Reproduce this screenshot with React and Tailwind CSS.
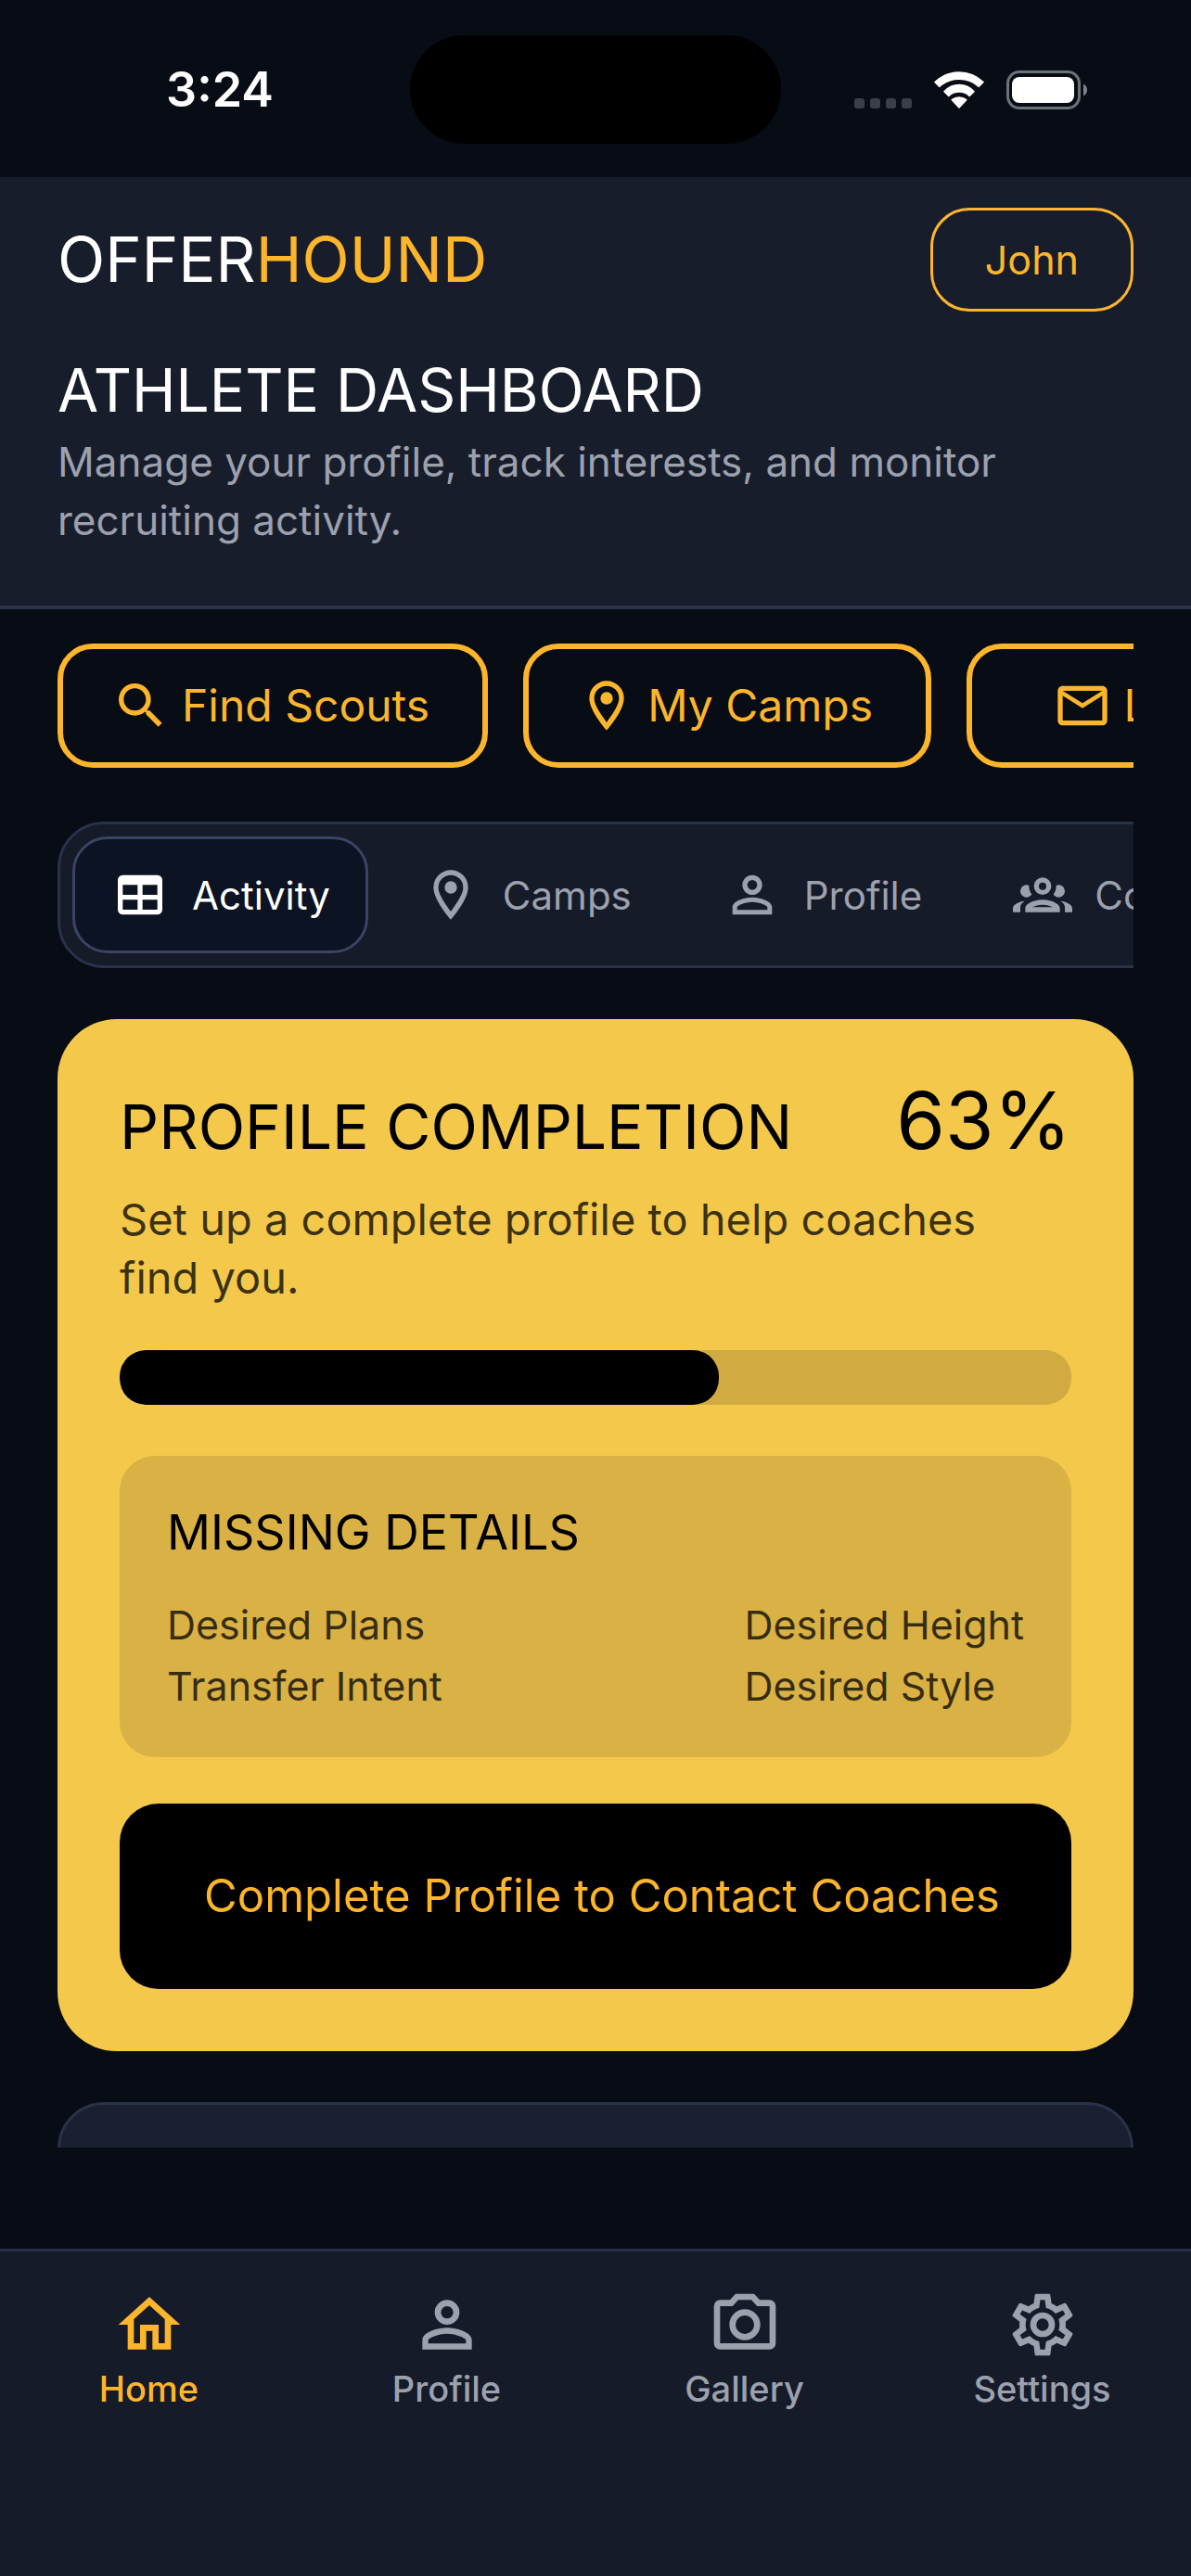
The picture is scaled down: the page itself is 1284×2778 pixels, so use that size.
import React from "react";

const ICONS = {
  magnify:
    "M9.5,3A6.5,6.5 0 0,1 16,9.5C16,11.11 15.41,12.59 14.44,13.73L14.71,14H15.5L20.5,19L19,20.5L14,15.5V14.71L13.73,14.44C12.59,15.41 11.11,16 9.5,16A6.5,6.5 0 0,1 3,9.5A6.5,6.5 0 0,1 9.5,3M9.5,5C7,5 5,7 5,9.5C5,12 7,14 9.5,14C12,14 14,12 14,9.5C14,7 12,5 9.5,5Z",
  marker:
    "M12,6.5A2.5,2.5 0 0,1 14.5,9A2.5,2.5 0 0,1 12,11.5A2.5,2.5 0 0,1 9.5,9A2.5,2.5 0 0,1 12,6.5M12,2A7,7 0 0,1 19,9C19,14.25 12,22 12,22C12,22 5,14.25 5,9A7,7 0 0,1 12,2M12,4A5,5 0 0,0 7,9C7,10 7,12 12,18.71C17,12 17,10 17,9A5,5 0 0,0 12,4Z",
  email:
    "M22 6C22 4.9 21.1 4 20 4H4C2.9 4 2 4.9 2 6V18C2 19.1 2.9 20 4 20H20C21.1 20 22 19.1 22 18V6M20 6L12 11L4 6H20M20 18H4V8L12 13L20 8V18Z",
  table:
    "M5,4H19A2,2 0 0,1 21,6V18A2,2 0 0,1 19,20H5A2,2 0 0,1 3,18V6A2,2 0 0,1 5,4M5,8V12H11V8H5M13,8V12H19V8H13M5,14V18H11V14H5M13,14V18H19V14H13Z",
  account:
    "M12,4A4,4 0 0,1 16,8A4,4 0 0,1 12,12A4,4 0 0,1 8,8A4,4 0 0,1 12,4M12,6A2,2 0 0,0 10,8A2,2 0 0,0 12,10A2,2 0 0,0 14,8A2,2 0 0,0 12,6M12,13C14.67,13 20,14.33 20,17V20H4V17C4,14.33 9.33,13 12,13M12,14.9C9.03,14.9 5.9,16.36 5.9,17V18.1H18.1V17C18.1,16.36 14.97,14.9 12,14.9Z",
  group:
    "M12,5A3.5,3.5 0 0,0 8.5,8.5A3.5,3.5 0 0,0 12,12A3.5,3.5 0 0,0 15.5,8.5A3.5,3.5 0 0,0 12,5M12,7A1.5,1.5 0 0,1 13.5,8.5A1.5,1.5 0 0,1 12,10A1.5,1.5 0 0,1 10.5,8.5A1.5,1.5 0 0,1 12,7M5.5,8A2.5,2.5 0 0,0 3,10.5C3,11.44 3.53,12.25 4.29,12.68C4.65,12.88 5.06,13 5.5,13C5.94,13 6.35,12.88 6.71,12.68C7.08,12.47 7.39,12.17 7.62,11.81C6.89,10.86 6.5,9.7 6.5,8.5C6.5,8.41 6.5,8.31 6.5,8.22C6.2,8.08 5.86,8 5.5,8M18.5,8C18.14,8 17.8,8.08 17.5,8.22C17.5,8.31 17.5,8.41 17.5,8.5C17.5,9.7 17.11,10.86 16.38,11.81C16.5,12 16.63,12.15 16.78,12.3C16.94,12.45 17.1,12.58 17.29,12.68C17.65,12.88 18.06,13 18.5,13C18.94,13 19.35,12.88 19.71,12.68C20.47,12.25 21,11.44 21,10.5A2.5,2.5 0 0,0 18.5,8M12,14C9.66,14 5,15.17 5,17.5V19H19V17.5C19,15.17 14.34,14 12,14M4.71,14.55C2.78,14.78 0,15.76 0,17.5V19H3V17.07C3,16.06 3.69,15.22 4.71,14.55M19.29,14.55C20.31,15.22 21,16.06 21,17.07V19H24V17.5C24,15.76 21.22,14.78 19.29,14.55M12,16C13.53,16 15.24,16.5 16.23,17H7.77C8.76,16.5 10.47,16 12,16Z",
  home: "M12 5.69L17 10.19V18H15V12H9V18H7V10.19L12 5.69M12 3L2 12H5V20H11V14H13V20H19V12H22",
  camera:
    "M20,4H16.83L15,2H9L7.17,4H4A2,2 0 0,0 2,6V18A2,2 0 0,0 4,20H20A2,2 0 0,0 22,18V6A2,2 0 0,0 20,4M20,18H4V6H8.05L9.88,4H14.12L15.95,6H20V18M12,7A5,5 0 0,0 7,12A5,5 0 0,0 12,17A5,5 0 0,0 17,12A5,5 0 0,0 12,7M12,15A3,3 0 0,1 9,12A3,3 0 0,1 12,9A3,3 0 0,1 15,12A3,3 0 0,1 12,15Z",
  cog: "M12,8A4,4 0 0,1 16,12A4,4 0 0,1 12,16A4,4 0 0,1 8,12A4,4 0 0,1 12,8M12,10A2,2 0 0,0 10,12A2,2 0 0,0 12,14A2,2 0 0,0 14,12A2,2 0 0,0 12,10M10,22C9.75,22 9.54,21.82 9.5,21.58L9.13,18.93C8.5,18.68 7.96,18.34 7.44,17.94L4.95,18.95C4.73,19.03 4.46,18.95 4.34,18.73L2.34,15.27C2.21,15.05 2.27,14.78 2.46,14.63L4.57,12.97L4.5,12L4.57,11L2.46,9.37C2.27,9.22 2.21,8.95 2.34,8.73L4.34,5.27C4.46,5.05 4.73,4.96 4.95,5.05L7.44,6.05C7.96,5.66 8.5,5.32 9.13,5.07L9.5,2.42C9.54,2.18 9.75,2 10,2H14C14.25,2 14.46,2.18 14.5,2.42L14.87,5.07C15.5,5.32 16.04,5.66 16.56,6.05L19.05,5.05C19.27,4.96 19.54,5.05 19.66,5.27L21.66,8.73C21.79,8.95 21.73,9.22 21.54,9.37L19.43,11L19.5,12L19.43,13L21.54,14.63C21.73,14.78 21.79,15.05 21.66,15.27L19.66,18.73C19.54,18.95 19.27,19.04 19.05,18.95L16.56,17.95C16.04,18.34 15.5,18.68 14.87,18.93L14.5,21.58C14.46,21.82 14.25,22 14,22H10M11.25,4L10.88,6.61C9.68,6.86 8.62,7.5 7.85,8.39L5.44,7.35L4.69,8.65L6.8,10.2C6.4,11.37 6.4,12.64 6.8,13.8L4.68,15.36L5.43,16.66L7.86,15.62C8.63,16.5 9.68,17.14 10.87,17.38L11.24,20H12.76L13.13,17.39C14.32,17.14 15.37,16.5 16.14,15.62L18.57,16.66L19.32,15.36L17.2,13.81C17.6,12.64 17.6,11.37 17.2,10.2L19.31,8.65L18.56,7.35L16.15,8.39C15.38,7.5 14.32,6.86 13.12,6.62L12.75,4H11.25Z",
};

function Icon({ name, className = "size-16" }) {
  return (
    <svg viewBox="0 0 24 24" fill="currentColor" aria-hidden="true" className={`shrink-0 ${className}`}>
      <path d={ICONS[name]} />
    </svg>
  );
}

function StatusBar() {
  return (
    <div className="flex h-[191px] shrink-0 items-center pt-0.5">
      <div className="flex-1 pl-8 text-center text-[52px] font-semibold leading-none">3:24</div>
      <div className="h-[117px] w-[400px] rounded-full bg-black" />
      <div className="flex flex-1 items-center justify-center gap-6 pr-8">
        <div className="flex h-10 items-end gap-1.5">
          {[0, 1, 2, 3].map((i) => (
            <span key={i} className="h-[11px] w-[11px] rounded-[3px] bg-[#3b3e48]" />
          ))}
        </div>
        <svg viewBox="0 0 54 40" className="h-10 w-[54px]" fill="white" stroke="white" strokeWidth="1.6" strokeLinejoin="round" aria-label="Wi-Fi">
          <path d="M1 11.5C16-2.6 38-2.6 53 11.5L48.3 16.3C36.5 5.6 17.5 5.6 5.7 16.3Z" />
          <path d="M11 21.7C20 12.2 34 12.2 43 21.7L38.2 26.4C32 20.6 22 20.6 15.8 26.4Z" />
          <path d="M19.3 30.6C23.7 27.2 30.3 27.2 34.7 30.6L27 39Z" />
        </svg>
        <svg viewBox="0 0 88 42" className="h-[42px] w-[88px]" aria-label="Battery">
          <rect x="1.5" y="1.5" width="77" height="39" rx="12.5" fill="none" stroke="#6e7178" strokeWidth="3" />
          <rect x="6" y="7" width="67" height="28" rx="8" fill="white" />
          <path d="M83 14.5C88.3 17 88.3 25 83 27.5Z" fill="#808389" />
        </svg>
      </div>
    </div>
  );
}

function Header() {
  return (
    <header className="shrink-0 border-b-4 border-[#2a314a] bg-[#181d2c] px-[62px] pb-[60px] pt-[33px]">
      <div className="flex items-center justify-between">
        <div className="text-[67px] leading-[80px]">
          OFFER<span className="text-[#fdb52b]">HOUND</span>
        </div>
        <button type="button" className="h-28 rounded-[42px] border-[3px] border-[#fdb52b] px-14 text-[43px] text-[#fdb52b]">
          John
        </button>
      </div>
      <h1 className="mt-[45px] text-[64px] leading-[80px]">ATHLETE DASHBOARD</h1>
      <p className="mt-1.5 text-[44px] leading-[63px] text-[#9ca1ae]">
        Manage your profile, track interests, and monitor recruiting activity.
      </p>
    </header>
  );
}

const ACTIONS = [
  { icon: "magnify", label: "Find Scouts" },
  { icon: "marker", label: "My Camps" },
  { icon: "email", label: "Letters" },
];

function QuickActions() {
  return (
    <div className="flex gap-[38px] overflow-hidden">
      {ACTIONS.map(({ icon, label }) => (
        <button
          key={label}
          type="button"
          className="flex h-[134px] min-w-[424px] shrink-0 items-center justify-center gap-3 rounded-[38px] border-[6px] border-[#fdb52b] pl-[52px] pr-[57px] text-[48px] text-[#fdb52b]"
        >
          <Icon name={icon} />
          {label}
        </button>
      ))}
    </div>
  );
}

const TABS = [
  { icon: "table", label: "Activity", active: true },
  { icon: "marker", label: "Camps" },
  { icon: "account", label: "Profile" },
  { icon: "group", label: "Coaches" },
];

function Tabs() {
  return (
    <div className="mt-[58px] overflow-hidden">
      <div role="tablist" className="flex w-max gap-4 rounded-[50px] border-[3px] border-[#2a314a] bg-[#161b2a] p-[13px]">
        {TABS.map(({ icon, label, active }) => (
          <button
            key={label}
            type="button"
            role="tab"
            aria-selected={Boolean(active)}
            className={`flex h-[126px] items-center gap-6 rounded-[38px] border-[3px] px-[38px] text-[42px] ${
              active ? "border-[#3b4463] bg-[#0c1322] text-white" : "border-transparent text-[#9ca1ae]"
            }`}
          >
            <Icon name={icon} />
            {label}
          </button>
        ))}
      </div>
    </div>
  );
}

const COMPLETION = 63;
const MISSING = [
  ["Desired Plans", "Transfer Intent"],
  ["Desired Height", "Desired Style"],
];

function CompletionCard() {
  return (
    <section className="mt-[55px] rounded-[64px] bg-[#f3c84b] p-[67px] text-black">
      <div className="flex items-end justify-between">
        <h2 className="text-[66px] leading-[74px]">PROFILE COMPLETION</h2>
        <div className="text-[85px] leading-[86px]">{COMPLETION}%</div>
      </div>
      <p className="mt-[31px] pr-14 text-[47px] leading-[63px] text-black/75">
        Set up a complete profile to help coaches find you.
      </p>
      <div
        role="progressbar"
        aria-label="Profile completion"
        aria-valuenow={COMPLETION}
        aria-valuemin={0}
        aria-valuemax={100}
        className="mt-[47px] h-[59px] overflow-hidden rounded-[28px] bg-[#d1ab41]"
      >
        <div className="h-full rounded-[28px] bg-black" style={{ width: `${COMPLETION}%` }} />
      </div>
      <div className="mt-[55px] rounded-[38px] bg-[#d9b144] px-[51px] pb-[50px] pt-[51px]">
        <h3 className="text-[52px] leading-[64px]">MISSING DETAILS</h3>
        <div className="mt-10 flex justify-between text-[43px] leading-[54px] text-black/75">
          {MISSING.map((column) => (
            <ul key={column[0]} className="flex flex-col gap-3">
              {column.map((item) => (
                <li key={item}>{item}</li>
              ))}
            </ul>
          ))}
        </div>
      </div>
      <button type="button" className="mt-[50px] h-[200px] w-full rounded-[42px] bg-black pl-3.5 text-[49px] text-[#fdb52b]">
        Complete Profile to Contact Coaches
      </button>
    </section>
  );
}

const NAV = [
  { icon: "home", label: "Home", active: true },
  { icon: "account", label: "Profile" },
  { icon: "camera", label: "Gallery" },
  { icon: "cog", label: "Settings" },
];

function BottomNav() {
  return (
    <nav className="grid shrink-0 grid-cols-4 border-t-[3px] border-[#2a2f48] bg-[#161b2a] pb-[179px] pt-[39px]">
      {NAV.map(({ icon, label, active }) => (
        <a
          key={label}
          href={`#${label.toLowerCase()}`}
          aria-current={active ? "page" : undefined}
          className={`flex flex-col items-center gap-1.5 text-[38px] font-medium leading-[46px] ${
            active ? "text-[#fdb52b]" : "text-[#9ca1ae]"
          }`}
        >
          <Icon name={icon} className="size-20" />
          {label}
        </a>
      ))}
    </nav>
  );
}

export default function App() {
  return (
    <div className="flex h-screen flex-col bg-[#070c15] font-['Inter',sans-serif] text-white">
      <StatusBar />
      <Header />
      <main className="mb-[109px] min-h-0 flex-1 overflow-hidden px-[62px] pt-[37px]">
        <QuickActions />
        <Tabs />
        <CompletionCard />
        <section className="mt-[55px] h-96 rounded-[50px] border-[3px] border-[#2a314a] bg-[#1b2030]" />
      </main>
      <BottomNav />
    </div>
  );
}
